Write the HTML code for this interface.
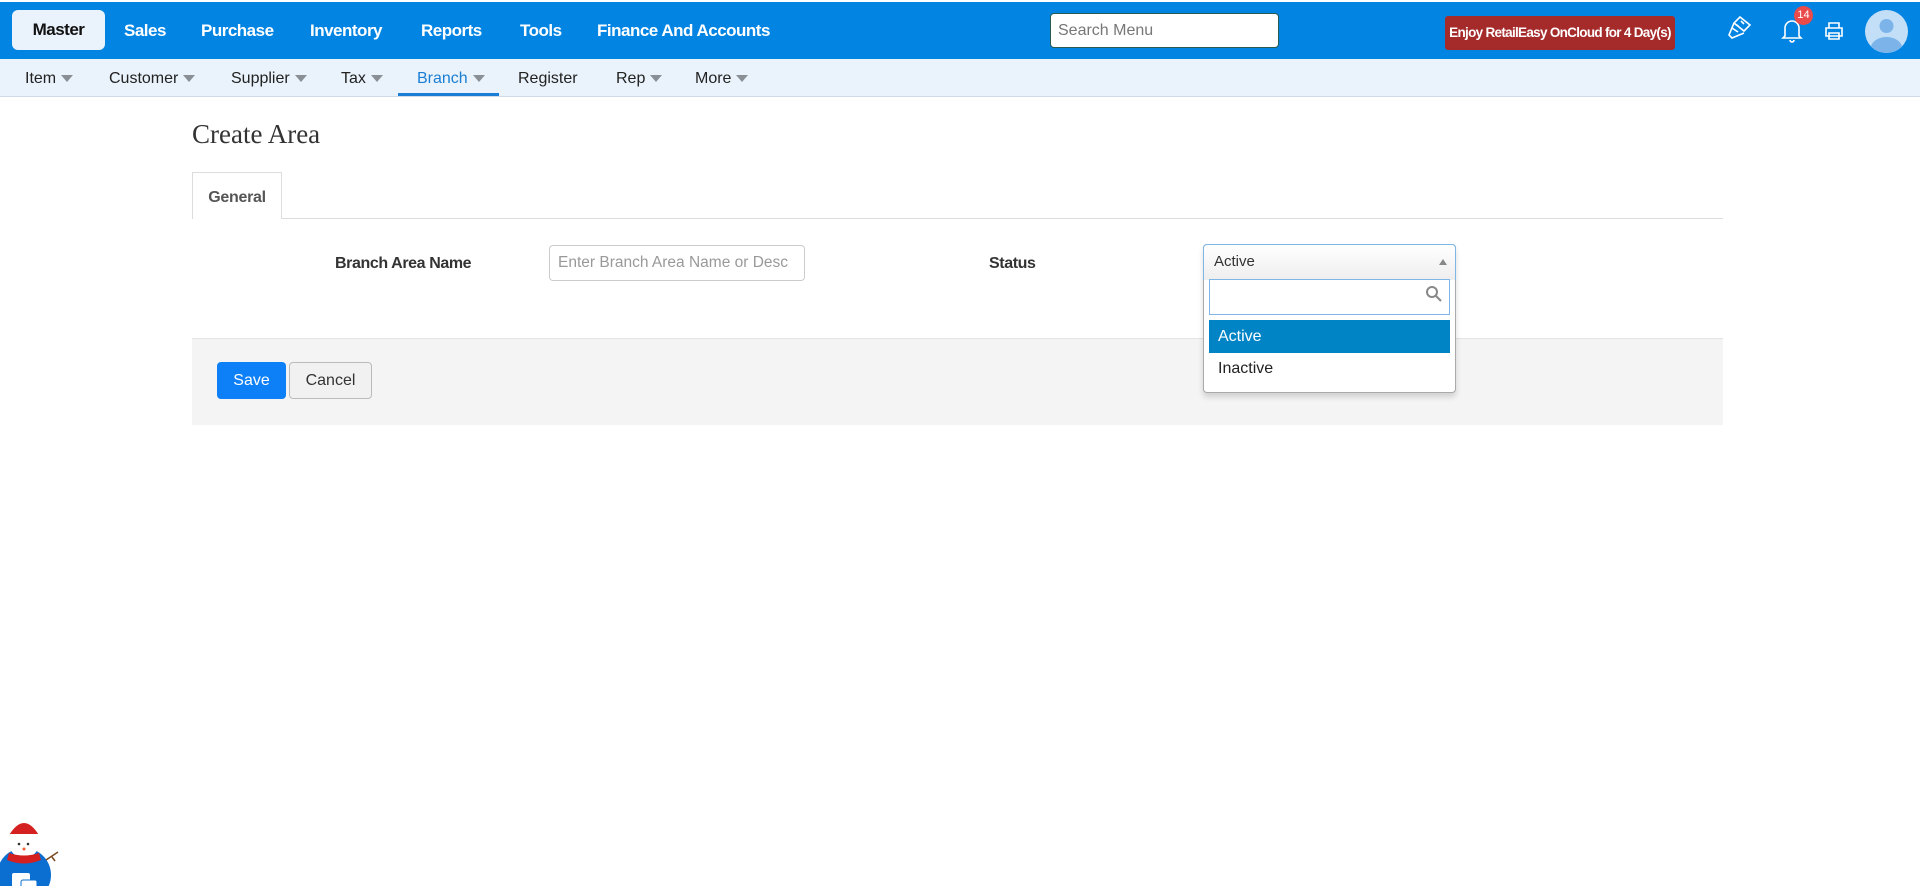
<!DOCTYPE html>
<html><head><meta charset="utf-8"><style>
*{box-sizing:border-box;margin:0;padding:0}
body{width:1920px;height:886px;overflow:hidden;background:#fff;font-family:"Liberation Sans",sans-serif;position:relative}
.top{position:absolute;left:0;top:2px;width:1920px;height:57px;background:#0284e3}
.nav{position:absolute;top:0;height:57px;line-height:57px;color:#fff;font-weight:bold;font-size:17px;letter-spacing:-0.5px}
.master{position:absolute;left:12px;top:8px;width:93px;height:40px;background:#eaf3fb;border-radius:6px;color:#111;font-weight:bold;font-size:17px;letter-spacing:-0.5px;text-align:center;line-height:40px}
.sub{position:absolute;left:0;top:59px;width:1920px;height:38px;background:#eaf3fb;border-bottom:1px solid #cfdbe6}
.si{position:absolute;top:1px;line-height:38px;font-size:16px;color:#222}
.ar{display:inline-block;width:0;height:0;border-left:6px solid transparent;border-right:6px solid transparent;border-top:7px solid #8a8f96;margin-left:5px;vertical-align:middle}
.abs{position:absolute}
</style></head><body>
<div class="top">
<div class="master">Master</div>
<div class="nav" style="left:124px">Sales</div>
<div class="nav" style="left:201px">Purchase</div>
<div class="nav" style="left:310px">Inventory</div>
<div class="nav" style="left:421px">Reports</div>
<div class="nav" style="left:520px">Tools</div>
<div class="nav" style="left:597px">Finance And Accounts</div>
<div class="abs" style="left:1050px;top:11px;width:229px;height:35px;background:#fff;border:1px solid #2a5a50;border-radius:4px;font-size:16px;color:#777;line-height:33px;padding-left:7px">Search Menu</div>
<div class="abs" style="left:1445px;top:14px;width:230px;height:34px;background:#a52a2a;border-radius:3px;color:#fff;font-weight:bold;font-size:13.5px;letter-spacing:-0.7px;text-align:center;line-height:34px;white-space:nowrap;overflow:hidden">Enjoy RetailEasy OnCloud for 4 Day(s)</div>
<svg class="abs" style="left:1726px;top:13px" width="26" height="28" viewBox="0 0 26 28" fill="none" stroke="#fff" stroke-width="1.6"><path d="M14 2l10 8-6 6-10-8z M8 8l-5 12 3 3 12-5 M6 13l6 4 M11 10l2 2 M15 6l3 3"/></svg>
<svg class="abs" style="left:1780px;top:14px" width="24" height="28" viewBox="0 0 24 28" fill="none" stroke="#fff" stroke-width="1.6"><path d="M5 20V12a7 7 0 0 1 14 0v8l2 2H3z M10 24a2 2 0 0 0 4 0"/></svg>
<div class="abs" style="left:1794px;top:4px;width:19px;height:19px;background:#e94b4b;border-radius:50%;color:#fff;font-size:11px;text-align:center;line-height:19px">14</div>
<svg class="abs" style="left:1823px;top:18px" width="22" height="22" viewBox="0 0 22 22" fill="none" stroke="#fff" stroke-width="1.6"><path d="M6 8V3h10v5 M3 8h16v8H3z M6 13h10v6H6z"/></svg>
<svg class="abs" style="left:1865px;top:8px" width="43" height="43" viewBox="0 0 43 43"><circle cx="21.5" cy="21.5" r="21.5" fill="#c2dff7"/><circle cx="21.5" cy="16" r="7" fill="#7cb4ea"/><path d="M6 36a16 12 0 0 1 31 0a21 21 0 0 1-31 0z" fill="#7cb4ea"/></svg>
</div>
<div class="sub">
<div class="si" style="left:25px">Item<span class="ar"></span></div>
<div class="si" style="left:109px">Customer<span class="ar"></span></div>
<div class="si" style="left:231px">Supplier<span class="ar"></span></div>
<div class="si" style="left:341px">Tax<span class="ar"></span></div>
<div class="si" style="left:417px;color:#1a7fd4">Branch<span class="ar"></span></div>
<div class="abs" style="left:398px;top:34px;width:101px;height:3px;background:#1a7fd4"></div>
<div class="si" style="left:518px">Register</div>
<div class="si" style="left:616px">Rep<span class="ar"></span></div>
<div class="si" style="left:695px">More<span class="ar"></span></div>
</div>
<div class="abs" style="left:192px;top:119px;font-family:'Liberation Serif',serif;font-size:27px;color:#333">Create Area</div>
<div class="abs" style="left:192px;top:218px;width:1531px;height:1px;background:#ddd"></div>
<div class="abs" style="left:192px;top:172px;width:90px;height:47px;background:#fff;border:1px solid #ddd;border-bottom:none;font-size:16px;font-weight:bold;color:#555;text-align:center;line-height:50px;letter-spacing:-0.3px">General</div>
<div class="abs" style="left:335px;top:255px;font-size:16px;font-weight:bold;color:#333;letter-spacing:-0.4px">Branch Area Name</div>
<div class="abs" style="left:549px;top:245px;width:256px;height:36px;border:1px solid #ccc;border-radius:4px;font-size:15.5px;color:#999;line-height:34px;padding-left:8px;white-space:nowrap;overflow:hidden">Enter Branch Area Name or Desc</div>
<div class="abs" style="left:989px;top:255px;font-size:16px;font-weight:bold;color:#333;letter-spacing:-0.4px">Status</div>
<div class="abs" style="left:192px;top:338px;width:1531px;height:87px;background:#f4f4f4;border-top:1px solid #e3e3e3"></div>
<div class="abs" style="left:217px;top:362px;width:69px;height:37px;background:#0d7ff7;border-radius:4px;color:#fff;font-size:16px;text-align:center;line-height:37px">Save</div>
<div class="abs" style="left:289px;top:362px;width:83px;height:37px;background:#f1f1f1;border:1px solid #bbb;border-radius:4px;color:#333;font-size:16px;text-align:center;line-height:35px">Cancel</div>
<div class="abs" style="left:1203px;top:244px;width:253px;height:149px;background:#fff;border:1px solid #aaa;border-radius:4px;box-shadow:0 4px 6px rgba(0,0,0,.15)"></div>
<div class="abs" style="left:1203px;top:244px;width:253px;height:36px;border:1px solid #7eb6e8;border-bottom:none;border-radius:4px 4px 0 0;background:linear-gradient(#fff,#eee);font-size:15px;color:#333;line-height:34px;padding-left:10px">Active<span style="position:absolute;right:8px;top:14px;width:0;height:0;border-left:4px solid transparent;border-right:4px solid transparent;border-bottom:6px solid #888"></span></div>
<div class="abs" style="left:1209px;top:279px;width:241px;height:36px;border:1px solid #7eb6e8;background:#fff"></div>
<svg class="abs" style="left:1425px;top:285px" width="18" height="18" viewBox="0 0 18 18" fill="none" stroke="#888" stroke-width="2"><circle cx="7" cy="7" r="5"/><path d="M11 11l5 5"/></svg>
<div class="abs" style="left:1209px;top:320px;width:241px;height:33px;background:#0084c5;color:#fff;font-size:16px;line-height:33px;padding-left:9px">Active</div>
<div class="abs" style="left:1218px;top:360px;font-size:16px;color:#222">Inactive</div>
<svg class="abs" style="left:0;top:805px" width="62" height="81" viewBox="0 0 62 81"><circle cx="24" cy="70" r="27" fill="#0a6fd0"/><circle cx="24" cy="38" r="15" fill="#fff"/><path d="M8 32q16-28 32 0z" fill="#d42020"/><rect x="8" y="29" width="33" height="6" rx="3" fill="#fff"/><circle cx="19" cy="39" r="1.3" fill="#333"/><circle cx="28" cy="39" r="1.3" fill="#333"/><circle cx="24" cy="44" r="1.5" fill="#f06030"/><path d="M7 55q17 7 34 0l-2-7q-15 5-30 0z" fill="#d42020"/><path d="M46 55l12-8M52 52l3 4" stroke="#7a4a20" stroke-width="1.5"/><rect x="12" y="68" width="18" height="14" rx="2" fill="#fff"/><rect x="21" y="75" width="16" height="12" rx="2" fill="#fff" stroke="#0a6fd0"/></svg>
</body></html>
